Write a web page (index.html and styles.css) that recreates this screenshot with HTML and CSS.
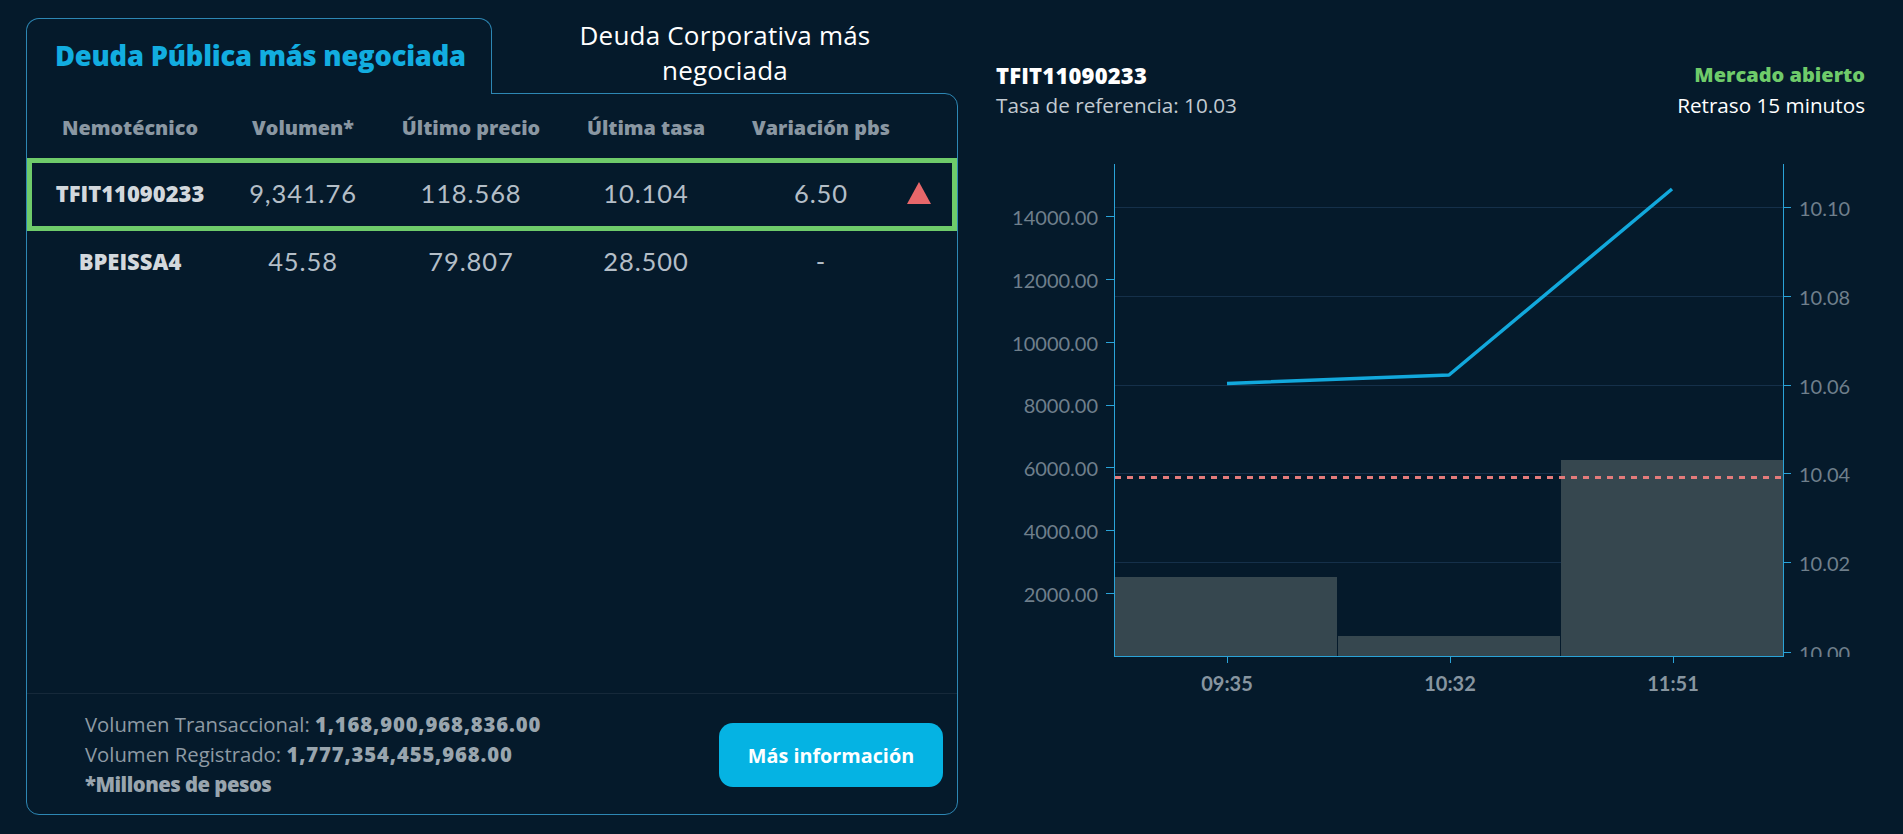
FILE: index.html
```html
<!DOCTYPE html>
<html lang="es">
<head>
<meta charset="utf-8">
<title>Deuda más negociada</title>
<link rel="stylesheet" href="styles.css">
</head>
<body>
<div class="page">
  <section class="market">
    <div class="tabs">
      <div class="tab tab-active">Deuda Pública más negociada</div>
      <div class="tab tab-inactive">Deuda Corporativa más<br>negociada</div>
    </div>
    <div class="panel">
      <div class="table">
        <div class="row head">
          <div>Nemotécnico</div>
          <div>Volumen*</div>
          <div>Último precio</div>
          <div>Última tasa</div>
          <div>Variación pbs</div>
          <div></div>
        </div>
        <div class="row data selected">
          <div class="code">TFIT11090233</div>
          <div>9,341.76</div>
          <div>118.568</div>
          <div>10.104</div>
          <div>6.50</div>
          <div class="trend"><span class="tri-up"></span></div>
        </div>
        <div class="row data">
          <div class="code">BPEISSA4</div>
          <div>45.58</div>
          <div>79.807</div>
          <div>28.500</div>
          <div>-</div>
          <div class="trend"></div>
        </div>
      </div>
      <div class="footer">
        <div class="totals">
          <div>Volumen Transaccional: <b>1,168,900,968,836.00</b></div>
          <div>Volumen Registrado: <b>1,777,354,455,968.00</b></div>
          <div class="note">*Millones de pesos</div>
        </div>
        <button class="btn">Más información</button>
      </div>
    </div>
  </section>

  <section class="chart-side">
    <div class="chart-head">
      <div>
        <div class="sym">TFIT11090233</div>
        <div class="ref">Tasa de referencia: 10.03</div>
      </div>
      <div class="status">
        <div class="open">Mercado abierto</div>
        <div class="delay">Retraso 15 minutos</div>
      </div>
    </div>
    <svg class="chart" width="869" height="550" viewBox="0 0 869 550">
      <defs>
        <clipPath id="rclip"><rect x="790" y="0" width="79" height="507"/></clipPath>
      </defs>
      <g class="grid">
        <line x1="119" y1="57.5" x2="787" y2="57.5"/>
        <line x1="119" y1="146.5" x2="787" y2="146.5"/>
        <line x1="119" y1="235.5" x2="787" y2="235.5"/>
        <line x1="119" y1="323.5" x2="787" y2="323.5"/>
        <line x1="119" y1="412.5" x2="787" y2="412.5"/>
      </g>
      <g class="bars">
        <rect x="119" y="427" width="222" height="79"/>
        <rect x="342" y="486" width="222" height="20"/>
        <rect x="565" y="310" width="222" height="196"/>
      </g>
      <line class="ref-line" x1="119" y1="327.5" x2="787" y2="327.5"/>
      <polyline class="series" points="231,233.5 453,225 676,39"/>
      <g class="axis">
        <line x1="118.5" y1="14" x2="118.5" y2="507"/>
        <line x1="787.5" y1="14" x2="787.5" y2="507"/>
        <line x1="118" y1="506.5" x2="788" y2="506.5"/>
        <line x1="110" y1="66.5" x2="118" y2="66.5"/>
        <line x1="110" y1="129.5" x2="118" y2="129.5"/>
        <line x1="110" y1="192.5" x2="118" y2="192.5"/>
        <line x1="110" y1="255.5" x2="118" y2="255.5"/>
        <line x1="110" y1="317.5" x2="118" y2="317.5"/>
        <line x1="110" y1="380.5" x2="118" y2="380.5"/>
        <line x1="110" y1="443.5" x2="118" y2="443.5"/>
        <line x1="788" y1="57.5" x2="795" y2="57.5"/>
        <line x1="788" y1="146.5" x2="795" y2="146.5"/>
        <line x1="788" y1="235.5" x2="795" y2="235.5"/>
        <line x1="788" y1="323.5" x2="795" y2="323.5"/>
        <line x1="788" y1="412.5" x2="795" y2="412.5"/>
        <line x1="788" y1="502.5" x2="795" y2="502.5"/>
        <line x1="231.5" y1="507" x2="231.5" y2="513"/>
        <line x1="454.5" y1="507" x2="454.5" y2="513"/>
        <line x1="677.5" y1="507" x2="677.5" y2="513"/>
      </g>
      <g class="ylab">
        <text x="102" y="66.5">14000.00</text>
        <text x="102" y="129.5">12000.00</text>
        <text x="102" y="192.5">10000.00</text>
        <text x="102" y="255">8000.00</text>
        <text x="102" y="317.5">6000.00</text>
        <text x="102" y="380.5">4000.00</text>
        <text x="102" y="443.5">2000.00</text>
      </g>
      <g class="rlab" clip-path="url(#rclip)">
        <text x="803" y="57.5">10.10</text>
        <text x="803" y="146.5">10.08</text>
        <text x="803" y="235.5">10.06</text>
        <text x="803" y="323.5">10.04</text>
        <text x="803" y="412.5">10.02</text>
        <text x="803" y="502.5">10.00</text>
      </g>
      <g class="xlab">
        <text x="231" y="533">09:35</text>
        <text x="454" y="533">10:32</text>
        <text x="677" y="533">11:51</text>
      </g>
    </svg>
  </section>
</div>
</body>
</html>
```

FILE: styles.css
```css
* { box-sizing: border-box; }

html, body {
  margin: 0;
  padding: 0;
  background: #051a2b;
  font-family: "Open Sans", "Noto Sans", "Liberation Sans", sans-serif;
  color: #c9d0d6;
}

.page {
  display: flex;
  align-items: flex-start;
  padding: 18px 0 0 26px;
  width: 1903px;
  height: 834px;
}

/* ---------- left market panel ---------- */
.market {
  width: 932px;
  display: flex;
  flex-direction: column;
}

.tabs {
  display: flex;
  height: 75px;
}

.tab {
  display: flex;
  align-items: center;
}

.tab-active {
  width: 466px;
  padding-left: 28px;
  border: 1px solid #2d87b4;
  border-bottom: none;
  border-radius: 13px 13px 0 0;
  background: #051a2b;
  position: relative;
  z-index: 1;
  height: 76px;
  margin-bottom: -1px;
  color: #12ade0;
  font-size: 27.3px;
  font-weight: 800;
  letter-spacing: -0.2px;
  padding-bottom: 2px;
}

.tab-inactive {
  flex: 1;
  justify-content: center;
  text-align: center;
  color: #ffffff;
  font-size: 26px;
  line-height: 35.5px;
  letter-spacing: 0.2px;
  padding-bottom: 5px;
}

.panel {
  height: 722px;
  border: 1px solid #2d87b4;
  border-radius: 0 13px 13px 13px;
  display: flex;
  flex-direction: column;
}

.table {
  flex: 1;
}

.row {
  display: grid;
  grid-template-columns: 206px 140px 196px 154px 196px 1fr;
  align-items: center;
  text-align: center;
}

.row.head {
  height: 64px;
  color: #8a97a2;
  font-size: 19.8px;
  font-weight: 800;
  padding-top: 2px;
}

.row.data {
  height: 60px;
  font-family: Lato, "Noto Sans", sans-serif;
  font-size: 25.5px;
  letter-spacing: 0.9px;
  color: #b4bec7;
}

.row.selected {
  height: 73px;
  box-shadow: inset 0 0 0 5px #6fcb6a;
  padding-bottom: 3px;
}

.code {
  font-family: "Open Sans", "Noto Sans", sans-serif;
  font-size: 22px;
  font-weight: 800;
  letter-spacing: 0;
  color: #d3d8dd;
}

.trend {
  justify-self: start;
  margin-left: -12px;
  display: flex;
}

.tri-up {
  width: 0;
  height: 0;
  border-left: 12.5px solid transparent;
  border-right: 12.5px solid transparent;
  border-bottom: 22px solid #e8676a;
}

.footer {
  height: 121px;
  border-top: 1px solid #16293a;
  display: flex;
  align-items: center;
  justify-content: space-between;
  padding: 0 14px 0 58px;
}

.totals {
  font-size: 20.3px;
  line-height: 30px;
  color: #8e9aa4;
}

.totals b {
  font-weight: 800;
  color: #99a5ae;
  letter-spacing: 0.85px;
}

.totals .note {
  font-weight: 800;
  color: #99a5ae;
  letter-spacing: -0.5px;
}

.btn {
  width: 224px;
  height: 64px;
  border: none;
  border-radius: 14px;
  background: #05b3e3;
  color: #ffffff;
  font-family: "Open Sans", "Noto Sans", sans-serif;
  font-size: 19.8px;
  font-weight: 700;
  margin-top: 2px;
}

/* ---------- right chart ---------- */
.chart-side {
  width: 869px;
  margin-left: 38px;
  display: flex;
  flex-direction: column;
}

.chart-head {
  display: flex;
  justify-content: space-between;
  padding-top: 42px;
  line-height: 30px;
  font-size: 20.7px;
}

.sym {
  color: #ffffff;
  font-weight: 800;
  font-size: 22px;
  letter-spacing: 0.2px;
}

.ref {
  color: #c2cad1;
}

.status {
  text-align: right;
}

.open {
  color: #6fcb6a;
  font-weight: 800;
  font-size: 20px;
}

.delay {
  color: #ffffff;
}

.chart {
  display: block;
  margin-top: 30px;
}

.grid line {
  stroke: #15304a;
  stroke-width: 1;
}

.bars rect {
  fill: #36474f;
}

.ref-line {
  stroke: #e47b7b;
  stroke-width: 3;
  stroke-dasharray: 6 6;
}

.series {
  fill: none;
  stroke: #12a8dc;
  stroke-width: 3.5;
  stroke-linejoin: round;
}

.axis line {
  stroke: #2aa3d8;
  stroke-width: 1;
}

.chart text {
  font-family: Lato, "Noto Sans", sans-serif;
}

.ylab text {
  fill: #6f7f8b;
  font-size: 20px;
  text-anchor: end;
  dominant-baseline: central;
}

.rlab text {
  fill: #6f7f8b;
  font-size: 20px;
  dominant-baseline: central;
}

.xlab text {
  fill: #8795a0;
  font-size: 20px;
  font-weight: 700;
  text-anchor: middle;
  dominant-baseline: central;
}
```
